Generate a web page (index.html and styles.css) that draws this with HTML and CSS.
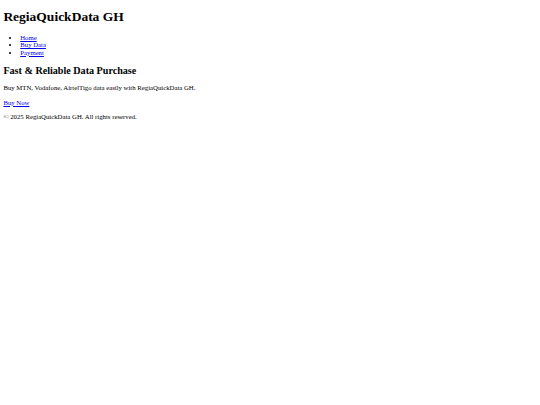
FILE: index.html
```html
<!DOCTYPE html>
<html lang="en">
<head>
<meta charset="utf-8">
<title>RegiaQuickData GH</title>
<link rel="stylesheet" href="styles.css">
</head>
<body class="page">
<header class="site-header">
<h1 class="site-title">RegiaQuickData GH</h1>
<nav class="site-nav">
<ul class="nav-list">
<li><a href="#">Home</a></li>
<li><a href="#">Buy Data</a></li>
<li><a href="#">Payment</a></li>
</ul>
</nav>
</header>
<main class="hero">
<h2 class="hero-title">Fast &amp; Reliable Data Purchase</h2>
<p class="text">Buy MTN, Vodafone, AirtelTigo data easily with RegiaQuickData GH.</p>
<p class="text"><a href="#">Buy Now</a></p>
</main>
<footer class="site-footer">
<p class="text">&copy; 2025 RegiaQuickData GH. All rights reserved.</p>
</footer>
</body>
</html>
```

FILE: styles.css
```css
.page {
  margin: 3.375px;
  font-family: "Liberation Serif", "Times New Roman", serif;
  font-size: 6.75px;
  line-height: 7.594px;
  color: #000;
  background: #fff;
}
.site-title {
  font-size: 13.5px;
  line-height: 15.6px;
  font-weight: bold;
  margin: 5.5px 0 9.045px;
}
.nav-list {
  margin: 6.75px 0;
  padding-left: 16.875px;
  list-style: disc;
}
.hero-title {
  font-size: 10.125px;
  line-height: 11.39px;
  font-weight: bold;
  margin: 8.4px 0;
}
.text {
  margin: 6.75px 0;
}
a {
  color: #0000ee;
}
```
